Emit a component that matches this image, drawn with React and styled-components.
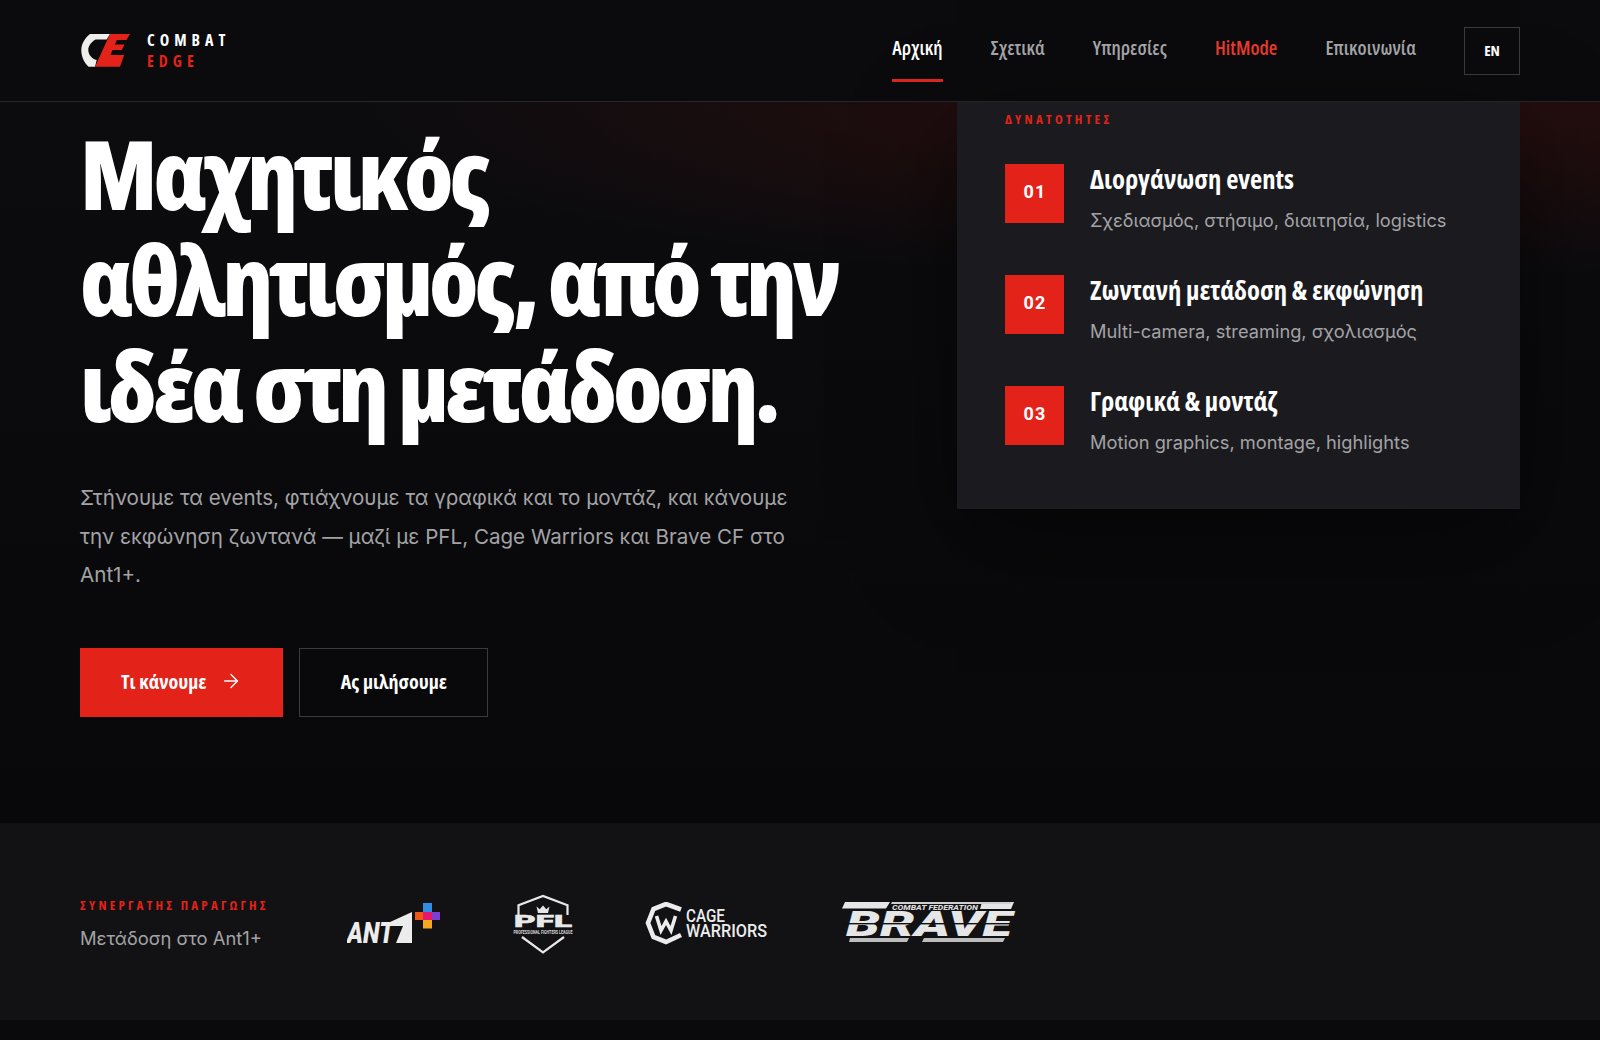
import React from "react";
import styled, { createGlobalStyle } from "styled-components";
import { ArrowRight } from "lucide-react";

const Global = createGlobalStyle`
  * { box-sizing: border-box; }
  html, body { margin: 0; padding: 0; background: #0a0a0c; }
  body { font-family: "Inter", "Noto Sans", sans-serif; color: #fff; overflow: hidden; }
`;
const COND = `"Open Sans", "Roboto", sans-serif`;

const Page = styled.div`width: 1600px; height: 1040px; display: flex; flex-direction: column; background: #0a0a0c;`;
const Header = styled.header`
  height: 102px; flex: none; display: flex; align-items: center; justify-content: space-between;
  padding: 0 80px; background: #0b0b0d; border-bottom: 1px solid #26272a;
`;
const Brand = styled.div`display: flex; align-items: center; gap: 15px;`;
const BrandText = styled.div`
  font-family: ${COND}; font-stretch: 75%; font-weight: 700; font-size: 16px; line-height: 21px; letter-spacing: 5px;
`;
const BrandRed = styled.div`color: #e32219;`;
const Nav = styled.nav`display: flex; align-items: center; gap: 48px;`;
const NavLink = styled.a`
  position: relative; font-family: ${COND}; font-stretch: 75%; font-size: 19.5px; font-weight: 600; line-height: 26px; letter-spacing: .05px; margin-bottom: 5px;
  color: ${p => p.$red ? "#e8392f" : p.$active ? "#fff" : "#a4a4a8"};
  &::after {
    content: ""; display: ${p => p.$active ? "block" : "none"}; position: absolute;
    left: 0; right: 0; bottom: -21px; height: 3px; background: #d9261c;
  }
`;
const Lang = styled.div`
  width: 56px; height: 48px; padding-bottom: 2px; border: 1px solid #3a3b3f; display: flex; align-items: center; justify-content: center;
  font-family: ${COND}; font-stretch: 75%; font-size: 15px; font-weight: 700;
`;
const Hero = styled.section`
  height: 721px; flex: none; padding: 0 80px; display: flex; justify-content: space-between; align-items: flex-start;
  background:
    radial-gradient(ellipse 950px 180px at 1300px 0, rgba(125,20,10,.28), transparent 100%),
    linear-gradient(180deg, #0c0c0f 0%, #08080a 100%);
`;
const HeroCopy = styled.div`width: 800px; padding-top: 18px;`;
const Title = styled.h1`
  margin: 0; font-family: ${COND}; font-stretch: 75%; font-weight: 800; font-size: 96px; line-height: 106px; letter-spacing: -4px; white-space: nowrap;
`;
const Lead = styled.p`
  margin: 41px 0 0; width: 720px; font-size: 20.6px; line-height: 38.7px; color: #a3a3a6;
`;
const Buttons = styled.div`display: flex; gap: 16px; margin-top: 53px;`;
const Button = styled.a`
  height: 69px; padding: 0 ${p => p.$primary ? 41 : 40.5}px 3px; display: flex; align-items: center; gap: 14px;
  font-family: ${COND}; font-stretch: 75%; font-size: 20px; font-weight: 700; color: #fff;
  background: ${p => p.$primary ? "#e32219" : "transparent"};
  border: ${p => p.$primary ? "none" : "1px solid #3a3b3f"};
`;
const Panel = styled.aside`
  width: 563px; height: 407px; padding: 8px 48px 0; background: #1b1b1f;
  box-shadow: 0 30px 90px rgba(0,0,0,.55);
`;
const Eyebrow = styled.div`
  font-family: ${COND}; font-stretch: 75%; font-weight: 700; font-size: 13px; line-height: 18px; letter-spacing: 3.3px; color: #e32219;
`;
const List = styled.div`display: flex; flex-direction: column; gap: 52px; margin-top: 36px;`;
const Item = styled.div`display: flex; gap: 26px; align-items: flex-start;`;
const Num = styled.div`
  width: 59px; height: 59px; flex: none; background: #e32219; display: flex; align-items: center; justify-content: center;
  font-family: "Roboto", sans-serif; font-weight: 700; font-size: 18px; letter-spacing: 1.2px; padding-bottom: 5px; padding-left: 1px;
`;
const ItemText = styled.div`display: flex; flex-direction: column; margin-top: -2px; height: 59px;`;
const ItemTitle = styled.div`font-family: ${COND}; font-stretch: 75%; font-weight: 700; font-size: 26.6px; line-height: 34px; white-space: nowrap;`;
const ItemSub = styled.div`font-size: 18.25px; line-height: 24px; margin-top: 12px; color: #a3a3a6; white-space: nowrap;`;
const Strip = styled.section`
  height: 197px; flex: none; background: #121214; padding: 0 80px; display: flex; align-items: center; gap: 78px;
`;
const StripLabel = styled.div`display: flex; flex-direction: column; gap: 11px; margin-top: 4px;`;
const StripName = styled.div`font-size: 18.4px; line-height: 26px; color: #a3a3a6;`;
const Logos = styled.div`display: flex; align-items: center; gap: 72px; margin-top: 4px;`;
const Label = styled(Eyebrow)`letter-spacing: 3.2px;`;

const CELogo = () => (
  <svg width="52" height="36" viewBox="0 0 52 36">
    <path d="M10 1H30L26.7 6.4H15.5C11 9 8.3 13 8.3 17c0 4.5 3.5 9 8.4 10L15 33.8H8.5C4 29.5 1.3 23.5 1.3 17 1.3 11 5 5 10 1Z" fill="#eeeeec"/>
    <path d="M30 1H50L46.4 7H36.8L35 11.5H44.5L41.8 17H32.4L30.5 22H44.2L40 33.8H15Z" fill="#e32219"/>
  </svg>
);
const AntLogo = () => (
  <svg width="94" height="44" viewBox="0 0 94 44">
    <text x="0" y="41" fontFamily="Roboto" fontWeight="900" fontStyle="italic" fontSize="29" fill="#ececec" textLength="47" lengthAdjust="spacingAndGlyphs">ANT</text>
    <path d="M42 20.6 65 10V41H49L56 24H44Z" fill="#ececec"/>
    <rect x="76" y="1" width="9" height="9" fill="#2f8de4"/>
    <rect x="68" y="10" width="8" height="8" fill="#ef5a12"/>
    <rect x="76" y="10" width="9" height="8" fill="#e6186e"/>
    <rect x="85" y="10" width="8" height="8" fill="#7d3fd1"/>
    <rect x="76" y="18" width="9" height="8.5" fill="#f5a91f"/>
  </svg>
);
const PflLogo = () => (
  <svg width="60" height="60" viewBox="0 0 60 60">
    <path d="M5.5 21V11.3L30 2 54.5 11.3V21M9 43 30 58.5 51 43" fill="none" stroke="#e8e8e8" strokeWidth="2.2"/>
    <path d="M23.5 12.5l3.2 2.8L30 11.5l3.3 3.8 3.2-2.8-1.5 6.5h-10Z" fill="#e8e8e8"/>
    <text x="30" y="33" textAnchor="middle" fontFamily="Roboto" fontWeight="900" fontSize="17" fill="#e8e8e8" stroke="#e8e8e8" strokeWidth=".5" textLength="58" lengthAdjust="spacingAndGlyphs">PFL</text>
    <text x="30" y="40" textAnchor="middle" fontFamily="Roboto" fontWeight="700" fontSize="5" fill="#d8d8d8" textLength="59" lengthAdjust="spacingAndGlyphs">PROFESSIONAL FIGHTERS LEAGUE</text>
  </svg>
);
const CageLogo = () => (
  <svg width="125" height="44" viewBox="0 0 125 44">
    <path d="M36 7.5 21 2 8.5 7 3 21 8.5 35 21 40 36 33" fill="none" stroke="#ececec" strokeWidth="4.6"/>
    <path d="M11.5 14 16 28.5 21 19.5 26 28.5 30.5 14" fill="none" stroke="#ececec" strokeWidth="3.6"/>
    <text x="41" y="20" fontFamily="Roboto" fontWeight="500" fontSize="17.5" fill="#ececec" textLength="39" lengthAdjust="spacingAndGlyphs">CAGE</text>
    <text x="41" y="35" fontFamily="Roboto" fontWeight="500" fontSize="17.5" fill="#ececec" textLength="81" lengthAdjust="spacingAndGlyphs">WARRIORS</text>
  </svg>
);
const BraveLogo = () => (
  <svg width="174" height="44" viewBox="0 0 174 44">
    <path d="M3 0H48L44 6.5H0Z M140 0H172L169 7H138Z" fill="#e6e6e6"/>
    <path d="M50 0H170L169 2H49Z" fill="#cfcfcf"/>
    <text x="50" y="7.5" fontFamily="Roboto" fontWeight="800" fontStyle="italic" fontSize="7.5" fill="#dcdcdc" textLength="86" lengthAdjust="spacingAndGlyphs">COMBAT FEDERATION</text>
    <text x="4" y="34" fontFamily="Roboto" fontWeight="900" fontStyle="italic" fontSize="35" fill="#e6e6e6" textLength="166" lengthAdjust="spacingAndGlyphs">BRAVE</text>
    <rect x="0" y="21" width="174" height="1.4" fill="#121214" />
    <path d="M8 36H67L65 40H7Z M82 36H163L161 40H80Z" fill="#bdbdbd"/>
  </svg>
);

const items = [
  ["01", "Διοργάνωση events", "Σχεδιασμός, στήσιμο, διαιτησία, logistics"],
  ["02", "Ζωντανή μετάδοση & εκφώνηση", "Multi-camera, streaming, σχολιασμός"],
  ["03", "Γραφικά & μοντάζ", "Motion graphics, montage, highlights"],
];

export default function App() {
  return (
    <Page>
      <Global />
      <Header>
        <Brand>
          <CELogo />
          <BrandText>COMBAT<BrandRed>EDGE</BrandRed></BrandText>
        </Brand>
        <Nav>
          <NavLink $active>Αρχική</NavLink>
          <NavLink>Σχετικά</NavLink>
          <NavLink>Υπηρεσίες</NavLink>
          <NavLink $red>HitMode</NavLink>
          <NavLink>Επικοινωνία</NavLink>
          <Lang>EN</Lang>
        </Nav>
      </Header>
      <Hero>
        <HeroCopy>
          <Title>Μαχητικός<br />αθλητισμός, από την<br />ιδέα στη μετάδοση.</Title>
          <Lead>Στήνουμε τα events, φτιάχνουμε τα γραφικά και το μοντάζ, και κάνουμε την εκφώνηση ζωντανά — μαζί με PFL, Cage Warriors και Brave CF στο Ant1+.</Lead>
          <Buttons>
            <Button $primary>Τι κάνουμε <ArrowRight size={22} strokeWidth={1.5} /></Button>
            <Button>Ας μιλήσουμε</Button>
          </Buttons>
        </HeroCopy>
        <Panel>
          <Eyebrow>ΔΥΝΑΤΟΤΗΤΕΣ</Eyebrow>
          <List>
            {items.map(([n, t, s]) => (
              <Item key={n}>
                <Num>{n}</Num>
                <ItemText>
                  <ItemTitle>{t}</ItemTitle>
                  <ItemSub>{s}</ItemSub>
                </ItemText>
              </Item>
            ))}
          </List>
        </Panel>
      </Hero>
      <Strip>
        <StripLabel>
          <Label>ΣΥΝΕΡΓΑΤΗΣ ΠΑΡΑΓΩΓΗΣ</Label>
          <StripName>Μετάδοση στο Ant1+</StripName>
        </StripLabel>
        <Logos>
          <AntLogo />
          <PflLogo />
          <CageLogo />
          <BraveLogo />
        </Logos>
      </Strip>
    </Page>
  );
}
